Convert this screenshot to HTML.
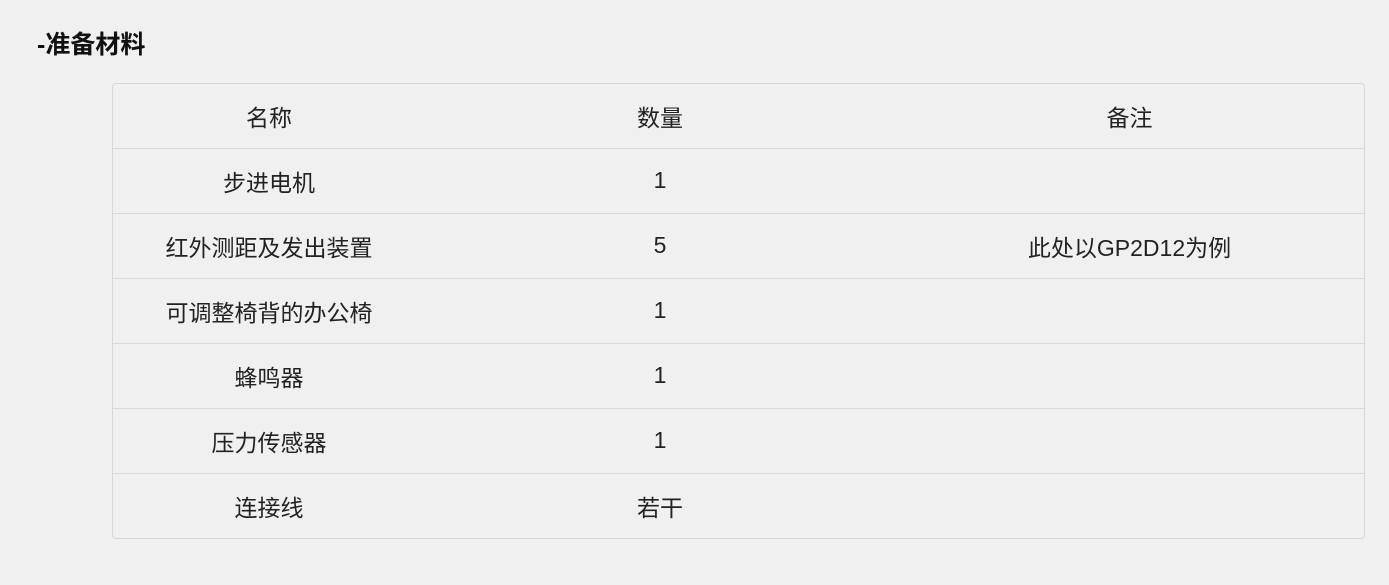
<!DOCTYPE html>
<html><head><meta charset="utf-8"><style>
html,body{margin:0;padding:0;background:#f0f0f0;width:1389px;height:585px;overflow:hidden}
body{font-family:"Liberation Sans","Noto Sans CJK SC",sans-serif;color:#222}
h3{position:absolute;left:37px;top:28px;margin:0;font-size:25px;font-weight:bold;line-height:34px;color:#111}
.t{position:absolute;left:112px;top:83px;width:1251px;border:1px solid #d6d6d6;border-radius:4px;overflow:hidden}
.r{display:flex;border-top:1px solid #d9d9d9;align-items:center;font-size:23px;box-sizing:border-box;height:65px;padding-bottom:1px}
.r:first-child{border-top:none;height:64px;padding-bottom:0}
.c1{width:312px;text-align:center}.c2{width:470px;text-align:center}.c3{width:469px;text-align:center}
</style></head><body>
<h3>-准备材料</h3>
<div class="t">
<div class="r"><div class="c1">名称</div><div class="c2">数量</div><div class="c3">备注</div></div>
<div class="r"><div class="c1">步进电机</div><div class="c2">1</div><div class="c3"></div></div>
<div class="r"><div class="c1">红外测距及发出装置</div><div class="c2">5</div><div class="c3">此处以GP2D12为例</div></div>
<div class="r"><div class="c1">可调整椅背的办公椅</div><div class="c2">1</div><div class="c3"></div></div>
<div class="r"><div class="c1">蜂鸣器</div><div class="c2">1</div><div class="c3"></div></div>
<div class="r"><div class="c1">压力传感器</div><div class="c2">1</div><div class="c3"></div></div>
<div class="r"><div class="c1">连接线</div><div class="c2">若干</div><div class="c3"></div></div>
</div>
</body></html>
